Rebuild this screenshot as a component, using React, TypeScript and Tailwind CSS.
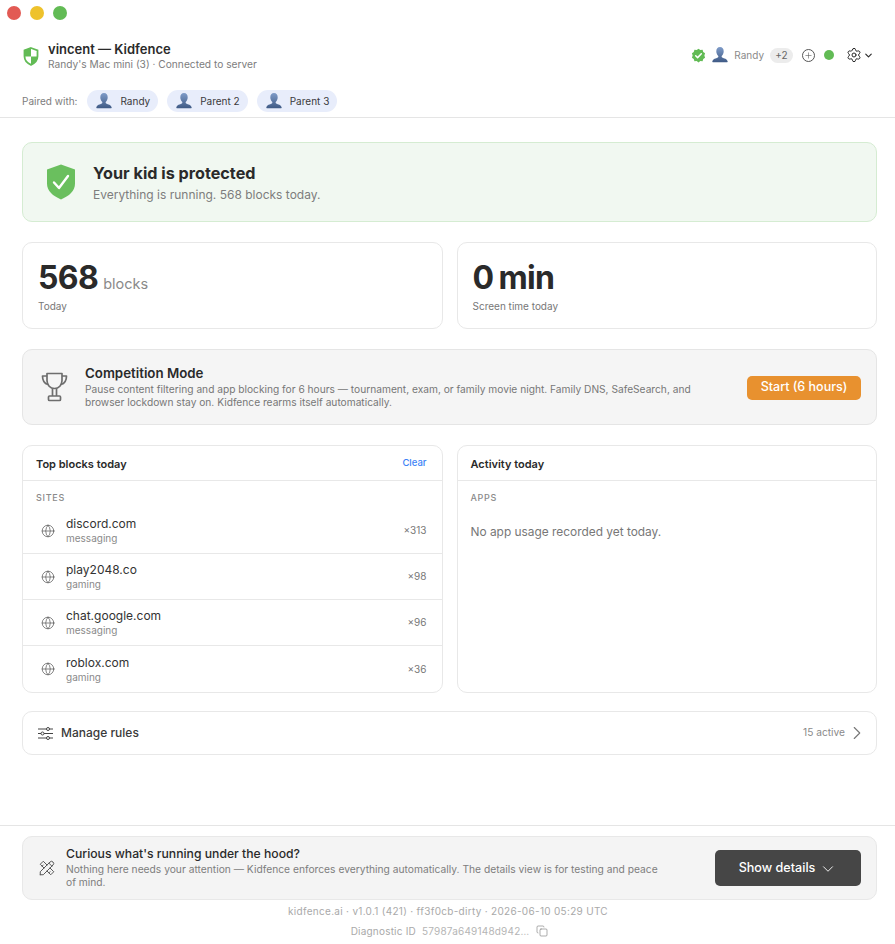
import React from 'react';
import { ChevronDown, ChevronRight, Copy, Globe, Plus, Settings } from 'lucide-react';
import { TbTools } from 'react-icons/tb';

const Avatar = ({ size = 18 }: { size?: number }) => (
  <svg width={size} height={size} viewBox="0 0 18 18" className="shrink-0">
    <defs>
      <linearGradient id="av" x1="0" y1="0" x2="0" y2="1">
        <stop offset="0" stopColor="#7f9cc9" />
        <stop offset="1" stopColor="#3f5a85" />
      </linearGradient>
    </defs>
    <path
      d="M9 1c2.400 0 3.700 1.800 3.700 4.200 0 1.900-.8 3.600-1.800 4.500-.4.400-.4 1.300.2 1.700 1.800.9 5.200 1.400 5.600 4.100.1.500-.2.800-.6.800H1.900c-.4 0-.7-.3-.6-.8.4-2.700 3.800-3.200 5.600-4.100.6-.4.6-1.300.2-1.700-1-.9-1.800-2.600-1.800-4.500C5.300 2.800 6.600 1 9 1z"
      fill="url(#av)"
    />
  </svg>
);

const Pill = ({ name }: { name: string }) => (
  <div className="flex h-[22px] items-center gap-[7px] rounded-full bg-[#e8edfb] pl-[8px] pr-[8px] text-[10px] text-[#3a3a3c]">
    <Avatar />
    <span>{name}</span>
  </div>
);

const SmallShield = () => (
  <svg width="16" height="19" viewBox="0 0 16 19">
    <path d="M8 1l6.500 2.300v6c0 4-2.800 6.900-6.500 8.500-3.700-1.600-6.500-4.500-6.500-8.500v-6z" fill="#fff" stroke="#62bb55" strokeWidth="1.800" />
    <path d="M8 1v8.500H1.500v-6zM8 9.500h6.500c0 4-2.800 6.900-6.500 8.500z" fill="#62bb55" />
  </svg>
);

const BigShield = () => (
  <svg width="30" height="36" viewBox="0 0 30 36">
    <path d="M15 .5l14 5v14c0 7.500-6 12.500-14 16-8-3.500-14-8.500-14-16v-14z" fill="#6abf5e" />
    <path d="M8 18.500l5 5.500 9-12" fill="none" stroke="#fff" strokeWidth="2.400" strokeLinecap="round" strokeLinejoin="round" />
  </svg>
);

const VerifiedBadge = () => (
  <svg width="15" height="15" viewBox="0 0 24 24">
    <path
      d="M12 1l2.900 2.100 3.600-.2 1.100 3.400 2.900 2.100L21.400 12l1.100 3.600-2.900 2.100-1.100 3.400-3.600-.2L12 23l-2.900-2.100-3.600.2-1.100-3.400-2.900-2.100L2.600 12 1.500 8.400l2.900-2.100 1.100-3.400 3.600.2z"
      fill="#62bb55"
    />
    <path d="M7.500 12.300l3.100 3.100 5.900-6.200" fill="none" stroke="#fff" strokeWidth="2.400" strokeLinecap="round" strokeLinejoin="round" />
  </svg>
);

const TrophyIcon = () => (
  <svg width="27" height="30" viewBox="0 0 27 30" fill="none" stroke="#6e6e6e" strokeWidth="1.700" strokeLinejoin="round" className="shrink-0">
    <path d="M6 1.500h15v7c0 4.600-3.200 8-7.500 8S6 13.100 6 8.500z" />
    <path d="M6 4H1.500c0 4.500 1.700 7.500 5.500 8.500M21 4h4.500c0 4.500-1.700 7.500-5.500 8.500" />
    <path d="M11.500 16.500v7.500M15.500 16.500v7.500" />
    <rect x="7.500" y="24" width="12" height="4.500" rx="1" />
  </svg>
);

const RulesIcon = () => (
  <svg width="15" height="13" viewBox="0 0 15 13" fill="none" stroke="#444" strokeWidth="1" className="shrink-0">
    <path d="M0 2h15M0 6.500h15M0 11h15" />
    <circle cx="10" cy="2" r="1.500" fill="#fff" />
    <circle cx="4.500" cy="6.500" r="1.500" fill="#fff" />
    <circle cx="10" cy="11" r="1.500" fill="#fff" />
  </svg>
);

const sites = [
  { host: 'discord.com', cat: 'messaging', count: '×313' },
  { host: 'play2048.co', cat: 'gaming', count: '×98' },
  { host: 'chat.google.com', cat: 'messaging', count: '×96' },
  { host: 'roblox.com', cat: 'gaming', count: '×36' },
];

const Stat = ({ value, unit, label }: { value: string; unit?: string; label: string }) => (
  <div className="h-[87px] rounded-[10px] border border-[#e8e8e8] bg-white px-[15px] pt-[15px]">
    <div className="flex h-[40px] items-baseline gap-[5px]">
      <span className="text-[32px] font-bold leading-[40px] tracking-[-0.02em] text-[#2a2a2a] [word-spacing:-2px]">{value}</span>
      {unit && <span className="text-[14.500px] text-[#8a8a8a]">{unit}</span>}
    </div>
    <div className="mt-[1px] text-[10px] leading-[14px] text-[#777]">{label}</div>
  </div>
);

export default function App() {
  return (
    <div className="flex h-[944px] w-full flex-col overflow-hidden bg-white font-['Inter',sans-serif]">
      <div className="flex h-[24px] items-center gap-[9px] pl-[7px] pt-[1px]">
        <span className="h-[14px] w-[14px] rounded-full bg-[#e25a54]" />
        <span className="h-[14px] w-[14px] rounded-full bg-[#eec22c]" />
        <span className="h-[14px] w-[14px] rounded-full bg-[#62bb55]" />
      </div>

      <header className="h-[94px] border-b border-[#e5e5e5] px-[22px] pt-[16px]">
        <div className="flex items-start justify-between">
          <div className="flex items-center gap-[9px] pl-[1px]">
            <SmallShield />
            <div>
              <div className="pt-[1px] text-[13px] font-semibold leading-[16px] text-[#2a2a2a]">vincent — Kidfence</div>
              <div className="text-[10.200px] leading-[15px] text-[#7d7d7d]">Randy's Mac mini (3) · Connected to server</div>
            </div>
          </div>
          <div className="-mr-[1px] mt-[6px] flex items-center text-[#333]">
            <VerifiedBadge />
            <span className="ml-[5px]"><Avatar /></span>
            <span className="ml-[5px] text-[10px] text-[#8a8a8a]">Randy</span>
            <span className="ml-[6px] flex h-[15px] w-[23px] items-center justify-center rounded-full bg-[#ececec] text-[10px] text-[#666]">+2</span>
            <span className="ml-[9px] flex h-[13px] w-[13px] items-center justify-center rounded-full border border-[#555]">
              <Plus size={9} strokeWidth={1.500} className="text-[#555]" />
            </span>
            <span className="ml-[9px] h-[10px] w-[10px] rounded-full bg-[#62bb55]" />
            <Settings size={16} strokeWidth={1.500} className="ml-[12px] text-[#2a2a2a]" />
            <ChevronDown size={11} strokeWidth={2.500} className="ml-[1px] text-[#2a2a2a]" />
          </div>
        </div>
        <div className="mt-[18px] flex items-center gap-[9px]">
          <span className="mr-[1px] text-[10px] text-[#7d7d7d]">Paired with:</span>
          <Pill name="Randy" />
          <Pill name="Parent 2" />
          <Pill name="Parent 3" />
        </div>
      </header>

      <main className="flex flex-1 flex-col gap-5 pl-[22px] pr-[18px] pt-[24px]">
        <section className="flex h-[80px] items-center rounded-[10px] border border-[#d5ecd2] bg-[#f1f8f1] pl-[23px]">
          <BigShield />
          <div className="ml-[17px] pt-[3px]">
            <div className="mb-[5px] text-[16.200px] font-bold leading-[18px] text-[#2a2a2a]">Your kid is protected</div>
            <div className="text-[12px] leading-[16px] text-[#7d7d7d]">Everything is running. 568 blocks today.</div>
          </div>
        </section>

        <section className="grid grid-cols-2 gap-[14px]">
          <Stat value="568" unit="blocks" label="Today" />
          <Stat value="0 min" label="Screen time today" />
        </section>

        <section className="flex h-[76px] items-center rounded-[10px] border border-[#e5e5e5] bg-[#f5f5f5] pl-[18px] pr-[15px]">
          <TrophyIcon />
          <div className="ml-[17px] w-[630px]">
            <div className="mb-[1px] text-[13.300px] font-semibold leading-[17px] text-[#2a2a2a]">Competition Mode</div>
            <div className="text-[10.200px] leading-[13px] text-[#777]">
              Pause content filtering and app blocking for 6 hours — tournament, exam, or family movie night. Family DNS, SafeSearch, and browser lockdown stay on. Kidfence rearms itself automatically.
            </div>
          </div>
          <button className="ml-auto mt-[1px] flex h-[24px] w-[114px] items-center justify-center rounded-[5px] bg-[#e8912f] text-[12.500px] font-medium text-white">
            Start (6 hours)
          </button>
        </section>

        <section className="grid h-[246px] grid-cols-2 gap-[14px]">
          <div className="rounded-[10px] border border-[#e8e8e8] bg-white">
            <div className="flex h-[35px] items-center justify-between border-b border-[#e8e8e8] pl-[13px] pr-[15px] pt-[3px]">
              <span className="text-[11px] font-semibold text-[#2a2a2a]">Top blocks today</span>
              <span className="-mt-[2px] text-[9.500px] font-medium text-[#3b82f6]">Clear</span>
            </div>
            <div className="pl-[13px] pt-[11px] text-[9px] font-medium leading-[12px] tracking-[0.08em] text-[#8a8a8a]">SITES</div>
            <div className="mt-[4px]">
              {sites.map((s, i) => (
                <div key={s.host} className={`flex h-[46px] items-center pl-[18px] pr-[15px] ${i < sites.length - 1 ? 'border-b border-[#e8e8e8]' : ''}`}>
                  <Globe size={14} strokeWidth={1.200} className="shrink-0 text-[#555]" />
                  <div className="ml-[11px]">
                    <div className="text-[12px] leading-[15px] text-[#333]">{s.host}</div>
                    <div className="text-[10px] leading-[14px] text-[#8a8a8a]">{s.cat}</div>
                  </div>
                  <span className="ml-auto text-[10px] text-[#777]">{s.count}</span>
                </div>
              ))}
            </div>
          </div>
          <div className="rounded-[10px] border border-[#e8e8e8] bg-white">
            <div className="flex h-[35px] items-center border-b border-[#e8e8e8] pl-[13px] pt-[3px]">
              <span className="text-[11px] font-semibold text-[#2a2a2a]">Activity today</span>
            </div>
            <div className="pl-[13px] pt-[11px] text-[9px] font-medium leading-[12px] tracking-[0.08em] text-[#8a8a8a]">APPS</div>
            <div className="pl-[13px] pt-[20px] text-[11.900px] leading-[16px] text-[#777]">No app usage recorded yet today.</div>
          </div>
        </section>

        <section className="flex h-[44px] items-center rounded-[10px] border border-[#e8e8e8] bg-white pl-[15px] pr-[8px]">
          <RulesIcon />
          <span className="ml-[8px] text-[12px] font-medium text-[#3a3a3a]">Manage rules</span>
          <span className="ml-auto text-[10.200px] text-[#8a8a8a]">15 active</span>
          <ChevronRight size={22} strokeWidth={1.200} className="ml-[1px] text-[#777]" />
        </section>
      </main>

      <footer className="h-[119px] border-t border-[#e5e5e5] pl-[22px] pr-[18px] pt-[10px]">
        <div className="flex h-[64px] items-center rounded-[10px] border border-[#e8e8e8] bg-[#f4f4f4] pl-[15px] pr-[15px]">
          <TbTools size={18} strokeWidth={1.300} className="shrink-0 text-[#555]" />
          <div className="ml-[10px] w-[600px]">
            <div className="mb-[3px] text-[12.200px] font-medium leading-[13px] text-[#2a2a2a]">Curious what's running under the hood?</div>
            <div className="text-[10.250px] leading-[13px] text-[#7d7d7d]">
              Nothing here needs your attention — Kidfence enforces everything automatically. The details view is for testing and peace of mind.
            </div>
          </div>
          <button className="ml-auto flex h-[36px] w-[146px] items-center justify-center gap-[4px] rounded-[5px] bg-[#464646] pt-[1px] text-[12.600px] font-medium text-white">
            Show details <ChevronDown size={18} strokeWidth={1.200} />
          </button>
        </div>
        <div className="mt-[4px] pr-[3px] text-center text-[10px] leading-[14px] tracking-[0.03em] text-[#a9a9a9]">
          kidfence.ai · v1.0.1 (421) · ff3f0cb-dirty · 2026-06-10 05:29 UTC
        </div>
        <div className="mt-[6px] flex items-center justify-center text-[10px] leading-[14px] tracking-[0.02em] text-[#a9a9a9]">
          <span>Diagnostic ID</span>
          <span className="ml-[6px] text-[#b5b5b5]">57987a649148d942…</span>
          <Copy size={12} strokeWidth={1.200} className="ml-[7px] text-[#777]" />
        </div>
      </footer>
    </div>
  );
}
